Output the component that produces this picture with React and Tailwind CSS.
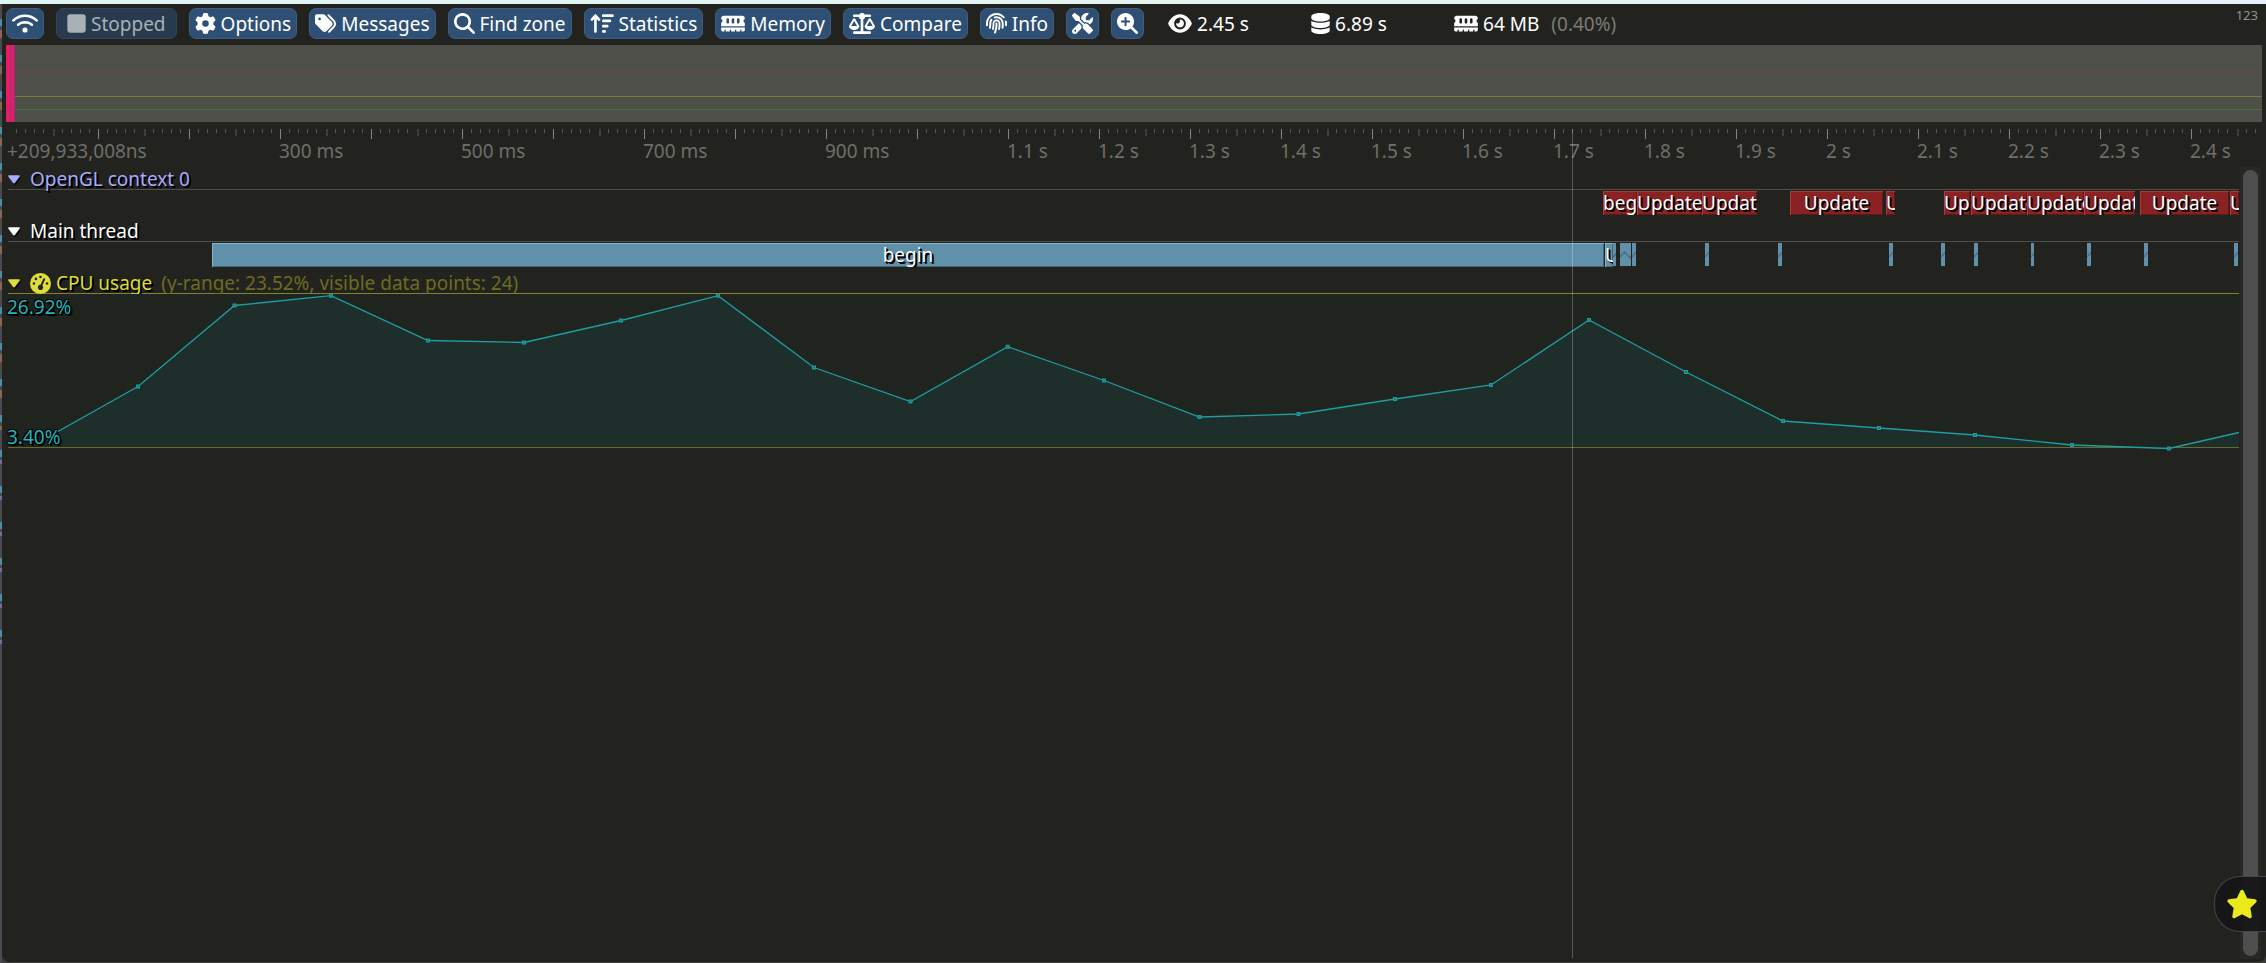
import React from "react";
import {
  FaWifi, FaSquare, FaGear, FaTags, FaMagnifyingGlass, FaArrowUpWideShort, FaMemory,
  FaScaleBalanced, FaFingerprint, FaScrewdriverWrench, FaMagnifyingGlassPlus, FaEye,
  FaDatabase, FaGaugeHigh, FaStar,
} from "react-icons/fa6";

// Length of the visible time range; one second is PX_PER_S units of the chart's own space.
const PX_PER_S = 910;
const VIEW = 2231;
const pct = (units) => `${(units / VIEW) * 100}%`;

const TOOLS = [
  { icon: FaWifi, name: "Connection", size: "w-[26px]" },
  { icon: FaSquare, label: "Stopped", disabled: true, size: "w-[19px]" },
  { icon: FaGear, label: "Options", size: "w-[21px]" },
  { icon: FaTags, label: "Messages", size: "w-[21px]" },
  { icon: FaMagnifyingGlass, label: "Find zone", size: "w-[21px]" },
  { icon: FaArrowUpWideShort, label: "Statistics", size: "w-[24px]" },
  { icon: FaMemory, label: "Memory", size: "w-[24px]" },
  { icon: FaScaleBalanced, label: "Compare", size: "w-[26px]" },
  { icon: FaFingerprint, label: "Info", size: "w-[21px]" },
  { icon: FaScrewdriverWrench, name: "Tools", size: "w-[21px]" },
  { icon: FaMagnifyingGlassPlus, name: "Zoom", size: "w-[21px]" },
];

const LABELS = [
  [3, "300 ms"], [5, "500 ms"], [7, "700 ms"], [9, "900 ms"], [11, "1.1 s"], [12, "1.2 s"],
  [13, "1.3 s"], [14, "1.4 s"], [15, "1.5 s"], [16, "1.6 s"], [17, "1.7 s"], [18, "1.8 s"],
  [19, "1.9 s"], [20, "2 s"], [21, "2.1 s"], [22, "2.2 s"], [23, "2.3 s"], [24, "2.4 s"],
];

const GPU_ZONES = [
  [1595, 34, "begin"], [1629, 65, "Update"], [1694, 55, "Update"], [1782, 93, "Update"],
  [1878, 9, "Update"], [1936, 26, "Update"], [1963, 56, "Update"], [2019, 57, "Update"],
  [2076, 51, "Update"], [2132, 89, "Update"], [2222, 9, "Update"],
];

const CPU_ZONES = [[204, 1392, "begin"], [1597, 8, "Update"]];

const FOLDED = [
  [1605, 3], [1612, 11], [1624, 4], [1697, 4], [1770, 4], [1881, 4], [1933, 4], [1966, 4],
  [2023, 3], [2079, 4], [2136, 4], [2226, 4],
];

const USAGE = [
  [33, 147], [130, 92.5], [226.5, 11.5], [323, 1.7], [420, 46.5], [516, 48.5], [613, 26.5],
  [710, 1.7], [806, 73.5], [902.5, 107.5], [999.7, 52.7], [1096, 86.5], [1191.5, 123],
  [1290.5, 120], [1387, 105], [1483, 91], [1581, 26], [1678, 78], [1775, 127], [1871, 134],
  [1967, 141], [2064, 151], [2161, 154.5], [2231, 138.5],
];

function ToolButton({ icon: Icon, label, name, disabled, size }) {
  return (
    <button
      type="button"
      disabled={disabled}
      aria-label={label || name}
      className={
        disabled
          ? "flex h-[31px] items-center gap-[5px] rounded-[7px] border border-[#2f4560] bg-[#283b4e] px-[10px] text-[#a9b0b6]"
          : "flex h-[31px] items-center gap-[5px] rounded-[7px] border border-[#465b7c] bg-[#2f5075] px-[5px] text-white hover:bg-[#3a6090]"
      }
    >
      <Icon className={`h-[21px] shrink-0 ${size}`} />
      {label && <span>{label}</span>}
    </button>
  );
}

function Ruler() {
  const ticks = Array.from({ length: 247 }, (_, i) => i + 1);
  return (
    <div className="relative ml-2 mr-[27px] h-[37px] text-[#6e6f69]">
      <svg className="block h-[10px] w-full overflow-visible" aria-hidden="true">
        {ticks.map((i) => {
          const major = i % 10 === 0;
          const mid = i % 5 === 0;
          return (
            <rect
              key={i}
              x={pct((i * PX_PER_S) / 100 - 1)}
              y="0"
              width={major || !mid ? 1 : 2}
              height={major ? 10 : mid ? 7 : 4}
              fill={major ? "#85867f" : mid ? "#3f403a" : "#55564f"}
              shapeRendering="crispEdges"
            />
          );
        })}
      </svg>
      <span className="absolute -left-px top-[9px]">+209,933,008ns</span>
      {LABELS.map(([t, text]) => (
        <span
          key={t}
          className="absolute top-[9px] whitespace-nowrap"
          style={{ left: pct((t * PX_PER_S) / 10 - 2) }}
        >
          {text}
        </span>
      ))}
    </div>
  );
}

function Heading({ className, children }) {
  return (
    <button
      type="button"
      className={`flex h-[23px] items-center whitespace-nowrap pt-[3px] [text-shadow:1px_1px_#000,2px_2px_#000] ${className}`}
    >
      <svg viewBox="0 0 13 9" className="mr-[10px] h-[9px] w-[12px] shrink-0 overflow-visible" aria-hidden="true">
        <path d="M2 2.5H14.5L9 10.5H7.500Z" fill="#0b0b0a" />
        <path d="M0.600 0H12.400Q13 0.800 12.500 1.500L7.500 8.200Q6.500 9 5.500 8.200L0.500 1.500Q0 0.800 0.600 0Z" fill="currentColor" />
      </svg>
      {children}
    </button>
  );
}

function Zone({ at, size, text, tone }) {
  return (
    <div
      className={`absolute top-px flex h-[24px] items-center overflow-hidden whitespace-nowrap [justify-content:safe_center] [text-shadow:1px_1px_#000,2px_2px_#000] ${tone}`}
      style={{ left: pct(at), width: pct(size) }}
    >
      {text}
    </div>
  );
}

function UsageChart() {
  const line = USAGE.map((p) => p.join(",")).join(" ");
  return (
    <div className="relative h-[154px] border-b border-[#68692a] bg-[#1f241f]">
      <svg
        viewBox="0 0 2231 153"
        preserveAspectRatio="none"
        className="block h-[153px] w-full overflow-visible"
        role="img"
        aria-label="CPU usage"
      >
        <polygon points={`33,153 ${line} 2231,153`} fill="#1e2e2b" />
        <polyline points={line} fill="none" stroke="#1f9da1" strokeWidth="1.300" vectorEffect="non-scaling-stroke" />
        {USAGE.slice(1, -1).map(([x, y]) => (
          <rect key={x} x={x - 1.5} y={y - 1.5} width="3" height="3" fill="#1b7f80" stroke="#1f9b9d" />
        ))}
      </svg>
      <span className="absolute -left-px top-0 text-[#23b3b8] [text-shadow:1px_1px_#000,-1px_1px_#000,1px_-1px_#000,-1px_-1px_#000,2px_2px_#000]">
        26.92%
      </span>
      <span className="absolute bottom-[-3px] -left-px text-[#23b3b8] [text-shadow:1px_1px_#000,-1px_1px_#000,1px_-1px_#000,-1px_-1px_#000,2px_2px_#000]">
        3.40%
      </span>
    </div>
  );
}

const GPU_TONE = "bg-[#8a2122] shadow-[inset_1px_1px_#ab3a3a,inset_-1px_-1px_#5e1818]";
const CPU_TONE = "bg-[#6190ab] shadow-[inset_1px_1px_#86b4cf,inset_-1px_-1px_#456578]";

export default function App() {
  return (
    <div className="flex min-h-screen flex-col bg-[#3a3b3f] font-['Noto_Sans',sans-serif] text-[19px] leading-[26px] text-white">
      <div className="h-1 bg-gradient-to-r from-[#e0f4f4] via-[#e4f5f0] to-[#e8f1f8]" />
      <div className="flex flex-1">
        <div className="flex w-[2px] flex-col">
          <div className="h-[426px] bg-[repeating-linear-gradient(#4a4a50_0px_15px,#4a8fa8_15px_22px,#4a4a50_22px_26px,#8a6552_26px_34px,#4a4a50_34px_36px)]" />
          <div className="h-[230px] bg-[repeating-linear-gradient(#4a4a50_0px_20px,#4a8fa8_20px_27px,#4a4a50_27px_30px,#7f68a0_30px_34px,#4a4a50_34px_36px)]" />
          <div className="flex-1 bg-[#4a4a50]" />
        </div>
        <main className="relative flex min-w-0 flex-1 flex-col overflow-hidden rounded-b-[8px] border-b border-[#3e3f3a] bg-[#22231e]">
          <header className="flex items-center gap-3 whitespace-nowrap px-1 pb-[6px] pt-1">
            {TOOLS.map((tool) => (
              <ToolButton key={tool.label || tool.name} {...tool} />
            ))}
            <div className="ml-3 flex items-center">
              <span className="flex w-[143px] items-center gap-[5px]">
                <FaEye className="h-[21px] w-[24px]" />
                2.45 s
              </span>
              <span className="flex w-[143px] items-center gap-[5px]">
                <FaDatabase className="h-[21px] w-[19px]" />
                6.89 s
              </span>
              <span className="flex items-center gap-[5px]">
                <FaMemory className="h-[21px] w-[24px]" />
                64 MB
              </span>
              <span className="ml-3 text-[#7b7c77]">(0.40%)</span>
            </div>
            <span className="ml-auto mr-1 self-start text-[13px] leading-[14px] text-[#91928d]">123</span>
          </header>

          <div className="relative ml-1 mr-1 h-[77px] bg-[#4d4f48]">
            <div className="h-[27px] border-b border-[#7a3f3e]" />
            <div className="h-[25px] border-b border-[#77783a]" />
            <div className="h-[13px] border-b border-[#44704b]" />
            <div className="absolute left-0 top-0 flex h-full w-[9px] bg-[#e61c66]">
              <div className="ml-1 w-px bg-[#8a3a80]" />
              <div className="ml-auto w-px bg-[#a02a78]" />
            </div>
          </div>

          <section className="relative -ml-[2px] mt-[7px] flex flex-1 flex-col">
            <Ruler />
            <div className="flex flex-1">
              <div className="ml-2 min-w-0 flex-1">
                <div className="border-b border-[#4f504b]">
                  <Heading className="text-[#aaaaff]">OpenGL context 0</Heading>
                </div>
                <div className="relative h-7 overflow-hidden">
                  {GPU_ZONES.map(([at, size, text]) => (
                    <Zone key={at} at={at} size={size} text={text} tone={GPU_TONE} />
                  ))}
                </div>
                <div className="border-b border-[#4f504b]">
                  <Heading className="text-white">Main thread</Heading>
                </div>
                <div className="relative h-7 overflow-hidden">
                  {CPU_ZONES.map(([at, size, text]) => (
                    <Zone key={at} at={at} size={size} text={text} tone={CPU_TONE} />
                  ))}
                  {FOLDED.map(([at, size]) => (
                    <div
                      key={at}
                      className="absolute top-px h-[23px] overflow-hidden bg-[#6190ab]"
                      style={{ left: pct(at), width: pct(size) }}
                    >
                      <svg viewBox="0 0 12 23" className="h-[23px] w-3 max-w-none" aria-hidden="true">
                        <path d="M0 14L4.500 9L10 15L12 12" fill="none" stroke="#48697d" strokeWidth="1.300" />
                      </svg>
                    </div>
                  ))}
                </div>
                <div className="border-b border-[#82832f]">
                  <Heading className="text-[#dddd3c]">
                    <FaGaugeHigh className="mr-[5px] h-[21px] w-[21px]" />
                    CPU usage
                    <span className="ml-[9px] text-[#6c6c22] [text-shadow:none]">
                      (y-range: 23.52%, visible data points: 24)
                    </span>
                  </Heading>
                </div>
                <UsageChart />
              </div>
              <div className="mb-[3px] ml-px mr-[5px] mt-px flex w-[21px] flex-col bg-[#272823] p-[3px]">
                <div className="flex-1 rounded-full bg-[#4f4f4f]" />
              </div>
            </div>
            <div className="pointer-events-none absolute inset-y-0 left-2 right-[27px] mb-1">
              <div className="absolute inset-y-0 w-px bg-white/25" style={{ left: pct(1564) }} />
            </div>
          </section>
          <button
            type="button"
            aria-label="Favourite"
            className="absolute bottom-[30px] right-0 flex h-14 w-[52px] items-center rounded-l-[26px] border border-r-0 border-[#43434d] bg-[#161616]/95 pl-[11px] text-[#e9e91c]"
          >
            <FaStar className="h-8 w-8" />
          </button>
        </main>
      </div>
    </div>
  );
}
